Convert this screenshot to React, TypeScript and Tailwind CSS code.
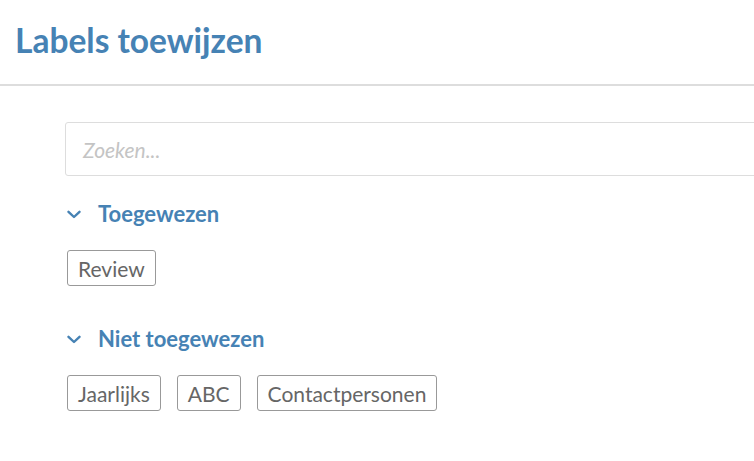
import React from "react";

function Chevron() {
  return (
    <svg width="14" height="9" viewBox="0 0 14 9" className="shrink-0">
      <path d="M1.5 1.8 L7 7 L12.5 1.8" fill="none" stroke="#4682b4" strokeWidth="2.4" strokeLinecap="round" strokeLinejoin="round" />
    </svg>
  );
}

function Tag({ label }: { label: string }) {
  return (
    <span className="inline-flex items-center h-[36px] px-[10px] border-[1.5px] border-[#999] rounded-[3px] text-[21px] text-[#666] leading-none">
      {label}
    </span>
  );
}

function Section({ title, tags }: { title: string; tags: string[] }) {
  return (
    <div>
      <div className="flex items-center gap-[17px] pl-[2px] h-[28px]">
        <Chevron />
        <span className="text-[22px] font-bold text-[#4682b4] leading-none">{title}</span>
      </div>
      <div className="flex gap-[16px] pl-[2px] mt-[22px]">
        {tags.map((t) => (
          <Tag key={t} label={t} />
        ))}
      </div>
    </div>
  );
}

export default function App() {
  return (
    <div className="w-[754px] h-[461px] overflow-hidden bg-white" style={{ fontFamily: "Lato, 'Open Sans', sans-serif" }}>
      <div className="h-[86px] border-b-2 border-[#ddd] flex items-center pl-[15px] pb-[2px]">
        <h1 className="text-[33.5px] font-bold text-[#4682b4] leading-none">Labels toewijzen</h1>
      </div>
      <div className="pl-[65px] pt-[36px]">
        <div className="w-[760px] h-[54px] border border-[#ddd] rounded-[3px] flex items-center pl-[17px]">
          <span className="italic text-[21px] text-[#c4c4c4] leading-none">Zoeken...</span>
        </div>
        <div className="mt-[24px]">
          <Section title="Toegewezen" tags={["Review"]} />
        </div>
        <div className="mt-[39px]">
          <Section title="Niet toegewezen" tags={["Jaarlijks", "ABC", "Contactpersonen"]} />
        </div>
      </div>
    </div>
  );
}
